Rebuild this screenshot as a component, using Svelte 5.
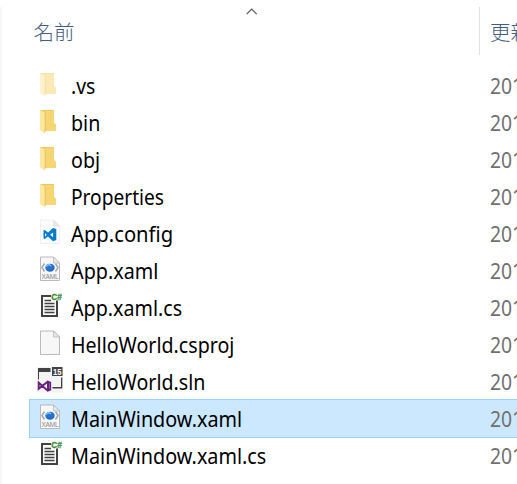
<script>
  const rows = [
    { name: '.vs', icon: 'folder', faded: true, width: 24 },
    { name: 'bin', icon: 'folder', width: 29 },
    { name: 'obj', icon: 'folder', width: 29 },
    { name: 'Properties', icon: 'folder', width: 93 },
    { name: 'App.config', icon: 'vscode', width: 102 },
    { name: 'App.xaml', icon: 'xaml', width: 87.5 },
    { name: 'App.xaml.cs', icon: 'cs', width: 111.5 },
    { name: 'HelloWorld.csproj', icon: 'file', width: 163.5 },
    { name: 'HelloWorld.sln', icon: 'sln', width: 134.5 },
    { name: 'MainWindow.xaml', icon: 'xaml', selected: true, width: 171.5 },
    { name: 'MainWindow.xaml.cs', icon: 'cs', width: 195 }
  ];

  // Condenses a label to the width given for it.
  function fit(node, width) {
    node.style.transform = `scaleX(${width / node.offsetWidth})`;
  }
</script>

{#snippet icon(kind)}
  <svg class="icon" viewBox="0 0 28 28" width="28" height="28" aria-hidden="true">
    {#if kind === 'folder'}
      <path d="M5 4h14v13l2 2v6H6z" fill="#eec65e" />
      <path d="M10 5h9v12l2 2v6H10z" fill="#f6d573" />
      <path d="M5 4l5 2.5V28l-5-4z" fill="#ffe7a0" />
      <path d="M10.2 6.5V26" stroke="#e5bd55" stroke-width=".8" />
    {:else if kind === 'cs'}
      <path d="M7 5h15v20H7z" fill="#fafafa" stroke="#424242" stroke-width="2" />
      <path d="M9.500 9.500h6.500M9.500 12.500h10M9.500 15.500h10M9.500 18.500h10M9.500 21.500h10" stroke="#424242" stroke-width="1.3" />
      <path d="M16 1h11v8.500H16z" fill="#f7f9f6" />
      <text x="16.300" y="9" font-family="Liberation Sans" font-size="9.500" font-weight="700" textLength="10.6" lengthAdjust="spacingAndGlyphs" fill="#388a34" stroke="#388a34" stroke-width=".3">C#</text>
    {:else if kind === 'sln'}
      <path d="M2 2h26v25.500H2z" fill="#f3f3f3" />
      <path d="M3 3h12.500v4H3zM3 7h1v7.500H3zM17 2h10.500v9H17zM26 12.500h1.300V23.500H17.500V22H26z" fill="#424242" />
      <text x="18" y="9.600" font-family="Liberation Sans" font-size="8.500" font-weight="700" textLength="8.5" lengthAdjust="spacingAndGlyphs" fill="#fff">15</text>
      <path d="M3.700 17.700v6l9-7 2.500 1v7l-2.500 1-9-8z" fill="none" stroke="#68217a" stroke-width="1.900" />
      <path d="M13 16v10" stroke="#68217a" stroke-width="2" />
    {:else}
      <path d="M5.500 3h13l6 6v17.500h-19z" fill={kind === 'vscode' ? '#fcfcfc' : '#f7f7f7'} stroke={kind === 'vscode' ? '#eeeeee' : '#b2b2b2'} stroke-width=".9" />
      <path d="M18.500 3v6h6z" fill="#e8e8e8" stroke={kind === 'vscode' ? '#e0e0e0' : '#b2b2b2'} stroke-width=".7" />
      {#if kind === 'vscode'}
        <path transform="translate(1.300 1.400)" fill-rule="evenodd" d="M7.200 12.200l1.200-.6 3.300 2.500 5-4.600 3.300 1.200v11l-3.300 1.200-5-4.900-3.300 2.600-1.200-.6zM8.700 14.500v3.800l1.700-1.900zM13.800 16.400l3 2.400V14z" fill="#007acc" />
      {:else if kind === 'xaml'}
        <path d="M9.500 9.500l-2.500 4 2.500 4M20.500 9.500l2.500 4-2.500 4" fill="none" stroke="#a5a9ae" stroke-width="1.500" />
        <ellipse cx="15" cy="13.700" rx="4.700" ry="4" fill="#2473d3" />
        <path d="M11 12.500l3-2 2 1.500" fill="none" stroke="#8bc8fb" stroke-width="1.400" />
        <path d="M12 16l3 .5 4-2" fill="none" stroke="#2f65b7" stroke-width="1" />
        <text x="6.500" y="25" font-family="Liberation Sans" font-size="6.500" textLength="17" fill="#888">XAML</text>
      {/if}
    {/if}
  </svg>
{/snippet}

<main>
  <header>
    <svg class="sort" width="12" height="7" viewBox="0 0 12 7" aria-hidden="true"><path d="M.7 6.200l5-5 5 5" fill="none" stroke="#555" stroke-width="1.200" /></svg>
    <div class="head name-head">名前</div>
    <div class="head date-head">更新日時</div>
  </header>
  <div class="list">
    {#each rows as row}
      <div class="row" class:selected={row.selected}>
        <div class="picture" class:faded={row.faded}>{@render icon(row.icon)}</div>
        <div class="name"><span use:fit={row.width}>{row.name}</span></div>
        <div class="date"><span>2017</span></div>
      </div>
    {/each}
  </div>
</main>

<style>
  :global(body) { overflow: hidden; background: #fff; }
  main {
    box-sizing: border-box;
    width: 517px;
    height: 484px;
    overflow: hidden;
    padding-top: 7px;
    background: linear-gradient(90deg, #f7f7f7 2px, transparent 2px) 0 7px no-repeat, #fff;
    font-family: 'Noto Sans', 'Noto Sans CJK JP', sans-serif;
  }
  header { position: relative; display: flex; height: 48px; margin-bottom: 13px; }
  .sort { position: absolute; left: 246px; top: 1px; }
  .head {
    box-sizing: border-box;
    flex: none;
    color: #445d7e;
    font: 300 20.5px/48px 'Noto Sans CJK JP', sans-serif;
    white-space: nowrap;
  }
  .name-head { width: 479px; padding-left: 33.5px; }
  .date-head { width: 180px; padding-left: 10px; border-left: 1px solid #e2e2e2; }
  .row {
    box-sizing: border-box;
    display: flex;
    height: 37px;
    margin-left: 29px;
    width: 600px;
    align-items: center;
    border: 1px solid transparent;
  }
  .selected {
    height: 39px;
    margin-top: -2px;
    padding-top: 2px;
    background: #cce8ff;
    border-color: #99d1ff;
  }
  .picture { width: 41px; height: 35px; flex: none; padding-left: 5px; box-sizing: border-box; }
  .icon { display: block; overflow: visible; }
  .faded { opacity: .52; }
  .name, .date { font-size: 21px; line-height: 35px; white-space: nowrap; }
  .name { width: 419px; flex: none; color: #000; }
  .name span, .date span { display: inline-block; transform-origin: left center; }
  .date { color: #707070; }
  .date span { transform: scaleX(.92); }
</style>
